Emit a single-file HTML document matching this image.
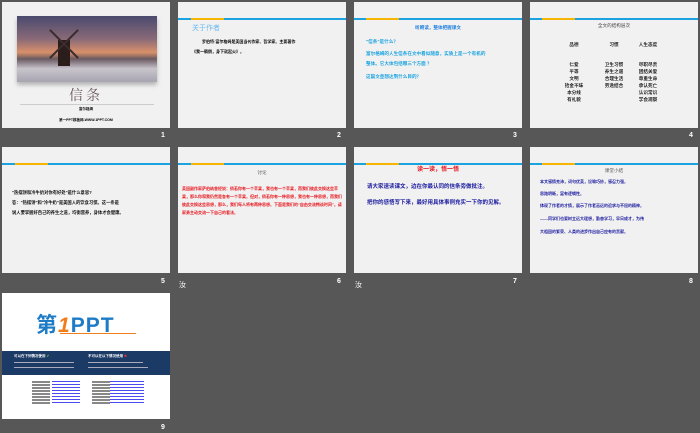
<!DOCTYPE html>
<html><head><meta charset="utf-8"><style>
*{margin:0;padding:0;box-sizing:border-box}
body{width:700px;height:433px;background:#575757;position:relative;overflow:hidden;font-family:"Liberation Sans","Noto Sans CJK SC",sans-serif}
.s{position:absolute;width:168px;height:126px;background:#f1f1f1;overflow:hidden}
.n{position:absolute;color:#fff;font-size:7px;font-weight:bold}
.bar{position:absolute;left:0;top:16px;width:100%;height:2px;background:#1aa3e0}
.bar i{position:absolute;left:12px;top:0;width:33px;height:2px;background:#f7b500}
.t{position:absolute;font-size:4.6px;font-weight:bold;line-height:7px;white-space:nowrap}
</style></head><body>
<!-- slide 1 -->
<div class="s" style="left:2px;top:2px">
<div style="position:absolute;left:15px;top:14px;width:140px;height:66px;background:linear-gradient(180deg,#4a4a6e 0%,#8a6a78 35%,#d9906a 55%,#6a5a62 65%,#c8c4cc 80%,#a8a4b0 100%);box-shadow:0 3px 4px rgba(0,0,0,.25)"></div>
<div style="position:absolute;left:56px;top:38px;width:12px;height:26px;background:#2a1d1c"></div>
<div style="position:absolute;top:22px;width:2px;height:40px;background:#3a2d2c;transform:rotate(45deg);left:61px"></div>
<div style="position:absolute;left:61px;top:22px;width:2px;height:40px;background:#3a2d2c;transform:rotate(-45deg)"></div>
<div style="position:absolute;left:0;width:168px;top:83px;text-align:center;font-size:14px;color:#6a5660;letter-spacing:3px;font-family:'Noto Serif CJK SC',serif">信条</div>
<div style="position:absolute;left:18px;top:102px;width:134px;height:1px;background:#ccc"></div>
<div class="t" style="left:0;width:168px;text-align:center;top:104px;font-size:3.5px">富尔格姆</div>
<div class="t" style="left:0;width:168px;text-align:center;top:115px;font-size:3.5px">第一PPT模板网-WWW.1PPT.COM</div>
</div><div class="n" style="left:161px;top:132px">1</div>
<!-- slide 2 -->
<div class="s" style="left:178px;top:2px">
<div class="bar" style="top:16px"><i style="left:13px;width:33px"></i></div>
<div style="position:absolute;left:14px;top:21px;font-size:7px;color:#6ab9ee">关于作者</div>
<div class="t" style="left:24px;top:36px;font-size:4px">罗伯特·富尔格姆是美国当代作家、哲学家。主要著作</div>
<div class="t" style="left:14px;top:46px;font-size:4px">《我一躺倒，身下就起火》。</div>
</div><div class="n" style="left:337px;top:132px">2</div>
<!-- slide 3 -->
<div class="s" style="left:354px;top:2px">
<div class="bar"><i></i></div>
<div class="t" style="left:0;width:168px;text-align:center;top:22px;color:#2080e0">听朗读，整体把握课文</div>
<div class="t" style="left:12px;top:36px;color:#1aa3e0">"信条"是什么？</div>
<div class="t" style="left:12px;top:48px;color:#1aa3e0">富尔格姆的人生信条在文中看似随意，实质上是一个有机的</div>
<div class="t" style="left:12px;top:58px;color:#1aa3e0">整体。它大体包括哪三个方面  ？</div>
<div class="t" style="left:12px;top:71px;color:#1aa3e0">这篇文章想达到什么目的？</div>
</div><div class="n" style="left:513px;top:132px">3</div>
<!-- slide 4 -->
<div class="s" style="left:530px;top:2px">
<div class="bar"><i></i></div>
<div class="t" style="left:0;width:168px;text-align:center;top:20px;color:#444;font-weight:normal">全文的结构层次</div>
<div class="t" style="left:24px;top:39px;width:40px;text-align:center;color:#222">品德</div>
<div class="t" style="left:64px;top:39px;width:40px;text-align:center;color:#222">习惯</div>
<div class="t" style="left:98px;top:39px;width:40px;text-align:center;color:#222">人生态度</div>
<div class="t" style="left:24px;top:59px;width:40px;text-align:center;line-height:7px;white-space:normal;color:#222">仁爱<br>平等<br>文明<br>拾金不昧<br>本分线<br>有礼貌</div>
<div class="t" style="left:64px;top:59px;width:40px;text-align:center;line-height:7px;white-space:normal;color:#222">卫生习惯<br>养生之道<br>合理生活<br>劳逸结合</div>
<div class="t" style="left:98px;top:59px;width:40px;text-align:center;line-height:7px;white-space:normal;color:#222">尽职尽责<br>团结关爱<br>尊重生命<br>承认死亡<br>认识常识<br>学会观察</div>
</div><div class="n" style="left:689px;top:132px">4</div>
<!-- slide 5 -->
<div class="s" style="left:2px;top:147px">
<div class="bar"><i style="left:13px"></i></div>
<div class="t" style="left:10px;top:42px;font-size:4.3px;color:#111">"热摆饼和冷牛奶对你有好处"是什么意思?</div>
<div class="t" style="left:10px;top:52px;font-size:4.3px;color:#111">答："热摆饼"和"冷牛奶"是美国人的饮食习惯。这一条是</div>
<div class="t" style="left:10px;top:62px;font-size:4.3px;color:#111">说人要掌握好自己的养生之道，均衡营养，身体才会健康。</div>
</div><div class="n" style="left:161px;top:278px">5</div>
<!-- slide 6 -->
<div class="s" style="left:178px;top:147px">
<div class="bar"><i style="left:13px"></i></div>
<div class="t" style="left:0;width:168px;text-align:center;top:22px;color:#555;font-weight:normal">讨论</div>
<div class="t" style="left:4px;top:38px;color:#e8141c;font-size:4px;line-height:8px;white-space:normal;width:162px">美国副作家萨伯纳曾经说：倘若你有一个苹果，我也有一个苹果，而我们彼此交换这些苹果，那么你和我仍然是各有一个苹果。但对，倘若你有一种思想，我也有一种思想，而我们彼此交换这些思想，那么，我们每人将有两种思想。下面是我们的"自由交流畅谈时间"，请家勇主动交流一下自己的看法。</div>
</div><div class="n" style="left:337px;top:278px">6</div>
<div class="n" style="left:179px;top:280px;font-weight:normal">汝</div>
<!-- slide 7 -->
<div class="s" style="left:354px;top:147px">
<div class="bar"><i></i></div>
<div class="t" style="left:0;width:168px;text-align:center;top:20px;color:#e8141c;font-size:6px">读一读，悟一悟</div>
<div class="t" style="left:13px;top:37px;color:#1a1aa0;font-size:5.5px">请大家速读课文，边在你最认同的信条旁做批注。</div>
<div class="t" style="left:13px;top:50px;color:#1a1aa0;font-size:5.5px;line-height:12px;white-space:normal;width:150px">把你的感悟写下来，最好用具体事例充实一下你的见解。</div>
</div><div class="n" style="left:513px;top:278px">7</div>
<div class="n" style="left:355px;top:280px;font-weight:normal">汝</div>
<!-- slide 8 -->
<div class="s" style="left:530px;top:147px">
<div class="bar"><i></i></div>
<div class="t" style="left:0;width:168px;text-align:center;top:20px;color:#555;font-weight:normal">课堂小结</div>
<div class="t" style="left:10px;top:31px;color:#1a1aa0;font-size:4px">本文感情充沛，词句优美，设喻巧妙，感召力强。</div>
<div class="t" style="left:10px;top:43px;color:#1a1aa0;font-size:4px">思路明晰，富有逻辑性。</div>
<div class="t" style="left:10px;top:55px;color:#1a1aa0;font-size:4px">体现了作者的才情，展示了作者高远的追求与不屈的精神。</div>
<div class="t" style="left:10px;top:68px;color:#1a1aa0;font-size:4px">——同学们也要树立远大理想，勤奋学习，早日成才，为伟</div>
<div class="t" style="left:10px;top:81px;color:#1a1aa0;font-size:4px">大祖国的繁荣、人类的进步作出自己应有的贡献。</div>
</div><div class="n" style="left:689px;top:278px">8</div>
<!-- slide 9 -->
<div class="s" style="left:2px;top:293px;background:#fff">
<div style="position:absolute;left:34px;top:16px;font-size:21px;color:#1e7bc6;font-weight:bold;letter-spacing:1px">第<span style="color:#f07d1a;font-style:italic">1</span>PPT</div>
<div style="position:absolute;left:58px;top:40px;width:76px;height:1px;background:#f07d1a"></div>
<div style="position:absolute;left:0;top:58px;width:168px;height:24px;background:#1c3a66"></div>
<div class="t" style="left:12px;top:60px;color:#fff;font-size:3.5px">可以在下列情况使用 <span style="color:#6c3">✔</span></div>
<div class="t" style="left:86px;top:60px;color:#fff;font-size:3.5px">不可以在以下情况使用 <span style="color:#e33">✖</span></div>
<div style="position:absolute;left:12px;top:69px;width:60px;height:1px;background:#aab"></div>
<div style="position:absolute;left:12px;top:74px;width:60px;height:1px;background:#aab"></div>
<div style="position:absolute;left:86px;top:69px;width:55px;height:1px;background:#aab"></div>
<div style="position:absolute;left:86px;top:74px;width:60px;height:1px;background:#aab"></div>
<div style="position:absolute;left:30px;top:88px;width:18px;height:24px;background:repeating-linear-gradient(#888 0 2px,#fff 2px 3px)"></div>
<div style="position:absolute;left:50px;top:88px;width:28px;height:24px;background:repeating-linear-gradient(#4a4aee 0 1px,#fff 1px 3px)"></div>
<div style="position:absolute;left:90px;top:88px;width:18px;height:24px;background:repeating-linear-gradient(#888 0 2px,#fff 2px 3px)"></div>
<div style="position:absolute;left:108px;top:88px;width:34px;height:24px;background:repeating-linear-gradient(#4a4aee 0 1px,#fff 1px 3px)"></div>
</div><div class="n" style="left:161px;top:424px">9</div>
</body></html>
